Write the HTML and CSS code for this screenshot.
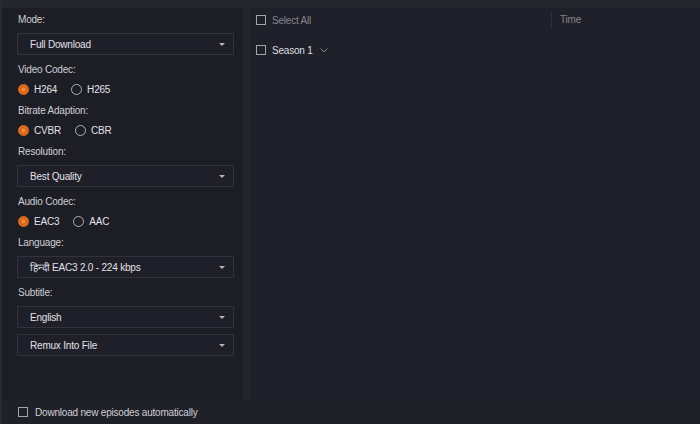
FILE: index.html
```html
<!DOCTYPE html>
<html lang="en">
<head>
	<meta charset="UTF-8">
	<title>Download Options</title>
	<link rel="stylesheet" href="styles.css">
</head>
<body>
	<div class="app">
		<div class="topbar"></div>

		<div class="main">
			<div class="settings">
				<div class="field">
					<label class="label">Mode:</label>
					<div class="select"><span>Full Download</span><i class="caret"></i></div>
				</div>

				<div class="field">
					<label class="label">Video Codec:</label>
					<div class="radios">
						<span class="radio on"><i></i>H264</span>
						<span class="radio"><i></i>H265</span>
					</div>
				</div>

				<div class="field">
					<label class="label">Bitrate Adaption:</label>
					<div class="radios">
						<span class="radio on"><i></i>CVBR</span>
						<span class="radio"><i></i>CBR</span>
					</div>
				</div>

				<div class="field">
					<label class="label">Resolution:</label>
					<div class="select"><span>Best Quality</span><i class="caret"></i></div>
				</div>

				<div class="field">
					<label class="label">Audio Codec:</label>
					<div class="radios">
						<span class="radio on"><i></i>EAC3</span>
						<span class="radio"><i></i>AAC</span>
					</div>
				</div>

				<div class="field">
					<label class="label">Language:</label>
					<div class="select"><span>हिन्दी EAC3 2.0 - 224 kbps</span><i class="caret"></i></div>
				</div>

				<div class="field">
					<label class="label">Subtitle:</label>
					<div class="select"><span>English</span><i class="caret"></i></div>
					<div class="select"><span>Remux Into File</span><i class="caret"></i></div>
				</div>
			</div>

			<div class="gutter"></div>

			<div class="episodes">
				<div class="list-head">
					<div class="col-name"><span class="check"></span>Select All</div>
					<div class="col-time">Time</div>
				</div>
				<div class="season">
					<span class="check"></span>Season 1
					<svg class="chevron" width="8" height="5" viewBox="0 0 8 5"><path d="M0.5 0.5 L4 4 L7.5 0.5" fill="none" stroke="#85858d" stroke-width="1"/></svg>
				</div>
			</div>
		</div>

		<div class="footer">
			<span class="check"></span>Download new episodes automatically
		</div>
	</div>
</body>
</html>
```

FILE: styles.css
```css
html,body{ margin:0; padding:0; }
body{ background:#202029; font-family:"Liberation Sans", Arial, sans-serif; font-size:10px; letter-spacing:-0.2px; color:#d8d8dc; }

.app{ height:424px; display:flex; flex-direction:column; border-left:2px solid #2a2a33; box-sizing:border-box; }
.topbar{ height:8px; background:#25252e; }
.main{ flex:1; display:flex; }

/* left column: download settings */
.settings{ width:241px; box-sizing:border-box; padding:5px 9px 0 15px; background:#1d1d26; display:flex; flex-direction:column; gap:7px; }
.field{ display:flex; flex-direction:column; }
.field:has(.select){ margin-bottom:1px; }
.label{ height:14px; line-height:14px; color:#cfcfd4; margin-bottom:6px; padding-left:1px; }
.field .select + .select{ margin-top:6px; }

.select{ height:22px; box-sizing:border-box; border:1px solid #32323c; background:#1f1f29; display:flex; align-items:center; padding:0 8px 0 12px; color:#e2e2e6; }
.select span{ flex:1; }
.caret{ width:0; height:0; border-left:3px solid transparent; border-right:3px solid transparent; border-top:3px solid #b4b4ba; }

.radios{ height:16px; display:flex; align-items:center; margin-top:-2px; padding-left:1px; }
.radio{ display:flex; align-items:center; margin-right:14px; color:#e2e2e6; }
.radio i{ width:11px; height:11px; box-sizing:border-box; border-radius:50%; border:1.5px solid #b0b0b7; margin-right:5px; }
.radio.on i{ border-color:#e8741d; background:radial-gradient(circle, #f08a3a 0, #f08a3a 1.5px, #d9661a 2.5px); }

.gutter{ width:6px; background:#24242d; }

/* right column: episode list */
.episodes{ flex:1; background:#20202a; padding-left:7px; }
.list-head{ height:24px; display:flex; align-items:center; color:#85858d; }
.col-name{ flex:1; display:flex; align-items:center; }
.col-time{ width:140px; height:18px; line-height:18px; border-left:1px solid #30303a; padding-left:8px; }

.season{ height:24px; margin-top:6px; display:flex; align-items:center; color:#dcdce0; }
.chevron{ margin-left:7px; }

.check{ width:10px; height:10px; box-sizing:border-box; border:1px solid #a4a4ab; margin-right:6px; }

.footer{ height:24px; display:flex; align-items:center; padding-left:16px; color:#cfcfd4; }
.footer .check{ margin-right:7px; }
```
